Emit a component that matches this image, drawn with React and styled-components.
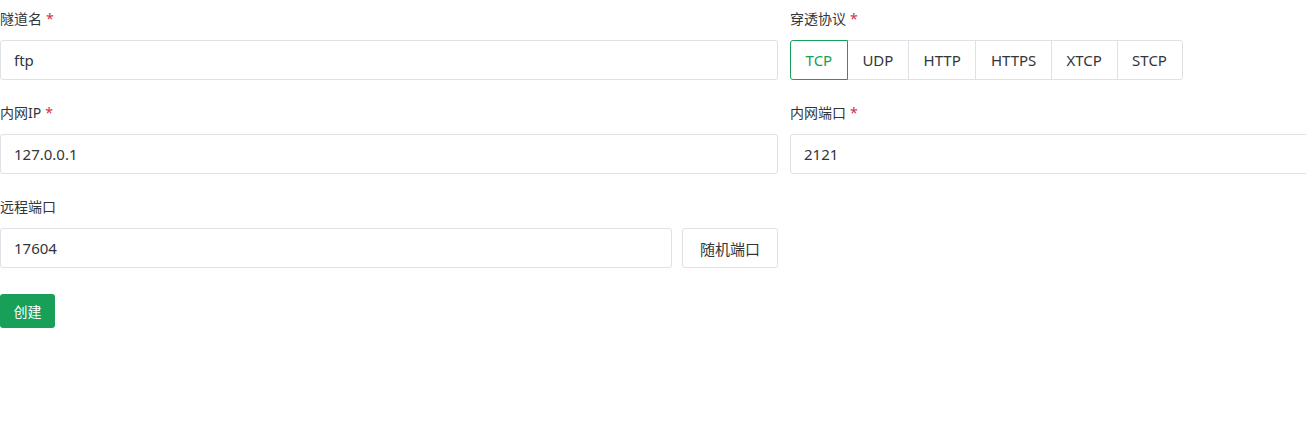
import React, { useState } from 'react';
import styled, { createGlobalStyle } from 'styled-components';

const GlobalStyle = createGlobalStyle`
  html, body {
    margin: 0;
    padding: 0;
    background: #fff;
  }
  body {
    font-family: "Noto Sans", "Noto Sans CJK SC", sans-serif;
    color: #333639;
  }
`;

const Page = styled.div`
  width: 100%;
  overflow: hidden;
`;

const Form = styled.form`
  width: 1568px;
  display: grid;
  grid-template-columns: 778px 778px;
  column-gap: 12px;
`;

const Item = styled.div`
  display: flex;
  flex-direction: column;
  padding-bottom: ${p => (p.$last ? '26px' : '14px')};
`;

const Label = styled.label`
  font-size: 14px;
  line-height: 26px;
  padding: 6px 0 8px;
  color: #333639;
`;

const Star = styled.span`
  color: #d03050;
  margin-left: 4px;
`;

const Input = styled.input`
  box-sizing: border-box;
  flex: ${p => (p.$grow ? '1 1 auto' : 'none')};
  width: 100%;
  min-width: 0;
  height: 40px;
  padding: 0 13px;
  border: 1px solid #e0e0e6;
  border-radius: 3px;
  font-family: inherit;
  font-size: 15px;
  color: #333639;
  outline: none;
  background: #fff;
`;

const Row = styled.div`
  display: flex;
  gap: 10px;
`;

const Segment = styled.div`
  display: flex;
`;

const SegButton = styled.button`
  height: 40px;
  padding: 0 14.6px;
  font-family: inherit;
  font-size: 15px;
  background: #fff;
  color: ${p => (p.$active ? '#18a058' : '#333639')};
  border: 1px solid ${p => (p.$active ? '#18a058' : '#e0e0e6')};
  margin-left: -1px;
  position: relative;
  z-index: ${p => (p.$active ? 1 : 0)};
  cursor: pointer;
  &:first-child {
    margin-left: 0;
    border-radius: 3px 0 0 3px;
  }
  &:last-child {
    border-radius: 0 3px 3px 0;
  }
`;

const PlainButton = styled.button`
  flex: none;
  height: 40px;
  padding: 0 17px;
  font-family: inherit;
  font-size: 15px;
  color: #333639;
  background: #fff;
  border: 1px solid #e0e0e6;
  border-radius: 3px;
  cursor: pointer;
`;

const SubmitButton = styled.button`
  height: 34px;
  padding: 0 13.5px;
  font-family: inherit;
  font-size: 14px;
  color: #fff;
  background: #18a058;
  border: none;
  border-radius: 3px;
  cursor: pointer;
`;

const protocols = ['TCP', 'UDP', 'HTTP', 'HTTPS', 'XTCP', 'STCP'];

export default function App() {
  const [proto, setProto] = useState('TCP');
  return (
    <Page>
      <GlobalStyle />
      <Form onSubmit={e => e.preventDefault()}>
        <Item>
          <Label>隧道名<Star>*</Star></Label>
          <Input defaultValue="ftp" />
        </Item>
        <Item>
          <Label>穿透协议<Star>*</Star></Label>
          <Segment>
            {protocols.map(p => (
              <SegButton type="button" key={p} $active={p === proto} onClick={() => setProto(p)}>
                {p}
              </SegButton>
            ))}
          </Segment>
        </Item>
        <Item>
          <Label>内网IP<Star>*</Star></Label>
          <Input defaultValue="127.0.0.1" />
        </Item>
        <Item>
          <Label>内网端口<Star>*</Star></Label>
          <Input defaultValue="2121" />
        </Item>
        <Item $last>
          <Label>远程端口</Label>
          <Row>
            <Input $grow defaultValue="17604" />
            <PlainButton type="button">随机端口</PlainButton>
          </Row>
        </Item>
        <div />
        <div>
          <SubmitButton type="submit">创建</SubmitButton>
        </div>
      </Form>
    </Page>
  );
}
